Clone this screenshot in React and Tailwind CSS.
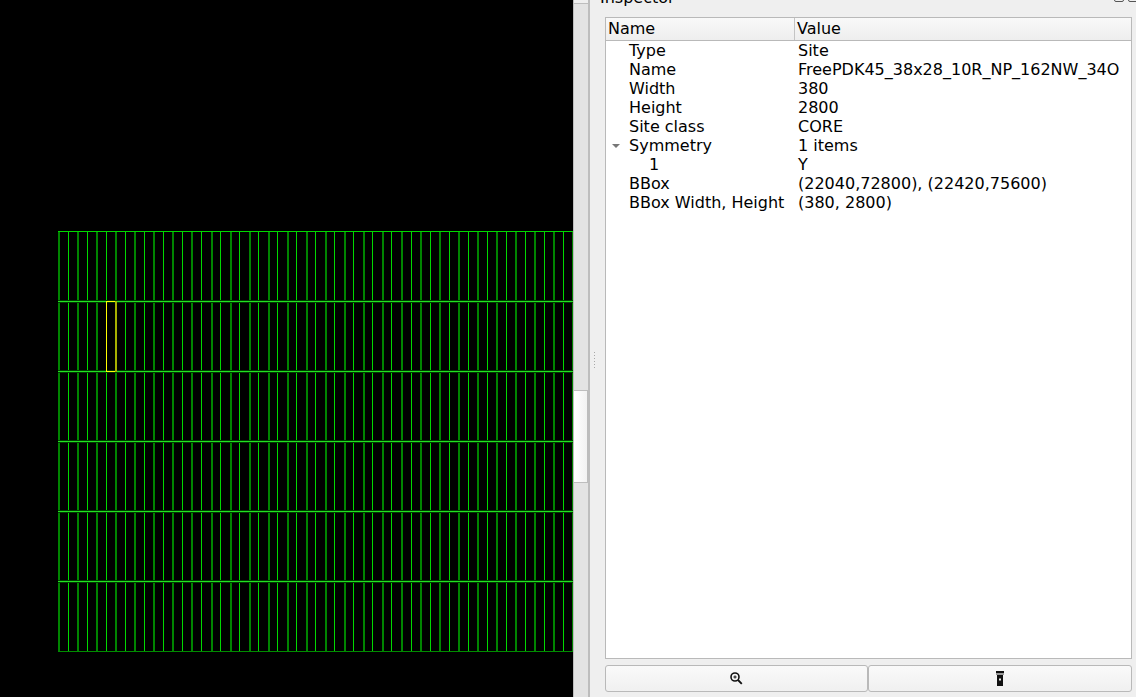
const FONT = "font-['DejaVu_Sans',sans-serif]";

const props = [
  { name: "Type", value: "Site" },
  { name: "Name", value: "FreePDK45_38x28_10R_NP_162NW_34O" },
  { name: "Width", value: "380" },
  { name: "Height", value: "2800" },
  { name: "Site class", value: "CORE" },
  { name: "Symmetry", value: "1 items", open: true },
  { name: "1", value: "Y", child: true },
  { name: "BBox", value: "(22040,72800), (22420,75600)" },
  { name: "BBox Width, Height", value: "(380, 2800)" },
];

// site rows drawn the way the layout viewer paints them
function SiteGrid() {
  const cols = [];
  for (let i = 0; i <= 54; i++) cols.push(i);
  const rows = [1, 2, 3, 4, 5];
  return (
    <svg width="573" height="697" className="block" shapeRendering="crispEdges">
      {cols.map((i) => {
        const x = 58.6 + i * 9.525;
        // even columns fall between two pixels and come out wide and dim
        if (i % 2 === 0) {
          const c = Math.floor(x) + 1;
          return <line key={i} x1={c} y1="231" x2={c} y2="652" stroke="#008400" strokeWidth="2" />;
        }
        const c = Math.floor(x) + 0.5;
        return <line key={i} x1={c} y1="231" x2={c} y2="652" stroke="#00d800" strokeWidth="1" />;
      })}
      <line x1="58" y1="231.5" x2="573" y2="231.5" stroke="#00d800" strokeWidth="1" />
      {rows.map((r) => (
        <g key={r}>
          <line x1="58" y1={231.5 + r * 70} x2="573" y2={231.5 + r * 70} stroke="#003c00" strokeWidth="3" />
          <line x1="58" y1={231.5 + r * 70} x2="573" y2={231.5 + r * 70} stroke="#22e022" strokeWidth="1" />
        </g>
      ))}
      <line x1="58" y1="651.5" x2="573" y2="651.5" stroke="#008c00" strokeWidth="1" />
      <line x1="116" y1="301" x2="116" y2="372" stroke="#a8b000" strokeWidth="2" />
      <path d="M115 301.5H106.5V371.5H115" fill="none" stroke="#ffff00" strokeWidth="1" />
    </svg>
  );
}

function ZoomIcon() {
  return (
    <svg width="13" height="13" viewBox="0 0 13 13" fill="none" stroke="#111" className="block">
      <circle cx="5" cy="5" r="4" strokeWidth="1.6" />
      <path d="M3.4 5h3.2M5 3.4v3.2" strokeWidth="1" />
      <path d="M8 8l3.8 3.8" strokeWidth="1.8" />
    </svg>
  );
}

function FlashlightIcon() {
  return (
    <svg width="8" height="15" viewBox="0 0 8 15" className="block">
      <rect x="0" y="0" width="8" height="2" fill="#111" />
      <rect x="0" y="2" width="8" height="2" fill="#999" />
      <rect x="1" y="4" width="6" height="11" fill="#111" />
      <rect x="3" y="7.5" width="2" height="2" fill="#eee" />
    </svg>
  );
}

export default function App() {
  return (
    <div className={`flex w-[1136px] h-[697px] overflow-hidden bg-[#efefef] ${FONT}`}>
      <div className="w-[573px] h-full bg-black shrink-0">
        <SiteGrid />
      </div>

      {/* vertical scrollbar */}
      <div className="w-[15px] h-full shrink-0 flex flex-col bg-[#e3e3e3] border-l border-[#bdbdbd]">
        <div className="h-[4px] border-b border-[#bdbdbd] bg-[#efefef]" />
        <div className="h-[386px]" />
        <div className="h-[93px] bg-gradient-to-r from-white to-[#f2f2f2] border-y border-[#bdbdbd] border-r" />
      </div>

      {/* splitter */}
      <div className="w-[17px] h-full shrink-0 border-l-2 border-[#bdbdbd] bg-[#efefef] flex flex-col items-start justify-center gap-[2px] pl-[4px] pt-[23px]">
        {[0, 1, 2, 3, 4, 5].map((d) => (
          <span key={d} className="w-px h-px bg-[#a8a8a8]" />
        ))}
      </div>

      {/* inspector dock */}
      <div className="flex-1 min-w-0 h-full flex flex-col pr-[4px]">
        <div className="relative h-[17px] shrink-0">
          <div className="absolute left-[-5px] top-[-12px] text-[16px] leading-[19px] text-black">Inspector</div>
          <div className="absolute right-[-6px] top-[-8px] flex gap-[4px]">
            <span className="w-[10px] h-[10px] rounded-[2px] border border-[#555]" />
            <span className="w-[10px] h-[10px] rounded-[2px] border border-[#555]" />
          </div>
        </div>

        <div className="h-[642px] shrink-0 border border-[#b9b9b9] bg-white flex flex-col">
          <div className="h-[23px] shrink-0 flex border-b border-[#b9b9b9] bg-gradient-to-b from-[#f9f9f9] to-[#eeeeee] text-[16px] text-black">
            <div className="w-[189px] shrink-0 border-r border-[#c4c4c4] pl-[2px] leading-[22px]">Name</div>
            <div className="flex-1 pl-[2px] leading-[22px]">Value</div>
          </div>
          <div>
            {props.map((p) => (
              <div key={p.name + p.value} className="flex h-[19px] text-[16px] leading-[19px] text-black whitespace-nowrap">
                <div className={`w-[189px] shrink-0 relative ${p.child ? "pl-[43px]" : "pl-[23px]"}`}>
                  {p.open && (
                    <span className="absolute left-[6px] top-[8px] w-0 h-0 border-x-[4px] border-x-transparent border-t-[4px] border-t-[#777]" />
                  )}
                  {p.name}
                </div>
                <div className="pl-[3px]">{p.value}</div>
              </div>
            ))}
          </div>
        </div>

        <div className="mt-[6px] h-[27px] shrink-0 flex">
          <button className="w-[263px] shrink-0 flex items-center justify-center rounded-[3px] border border-[#b9b9b9] bg-gradient-to-b from-[#fafafa] to-[#f0f0f0]">
            <ZoomIcon />
          </button>
          <button className="flex-1 flex items-center justify-center rounded-[3px] border border-[#b9b9b9] bg-gradient-to-b from-[#fafafa] to-[#f0f0f0]">
            <FlashlightIcon />
          </button>
        </div>
      </div>
    </div>
  );
}
